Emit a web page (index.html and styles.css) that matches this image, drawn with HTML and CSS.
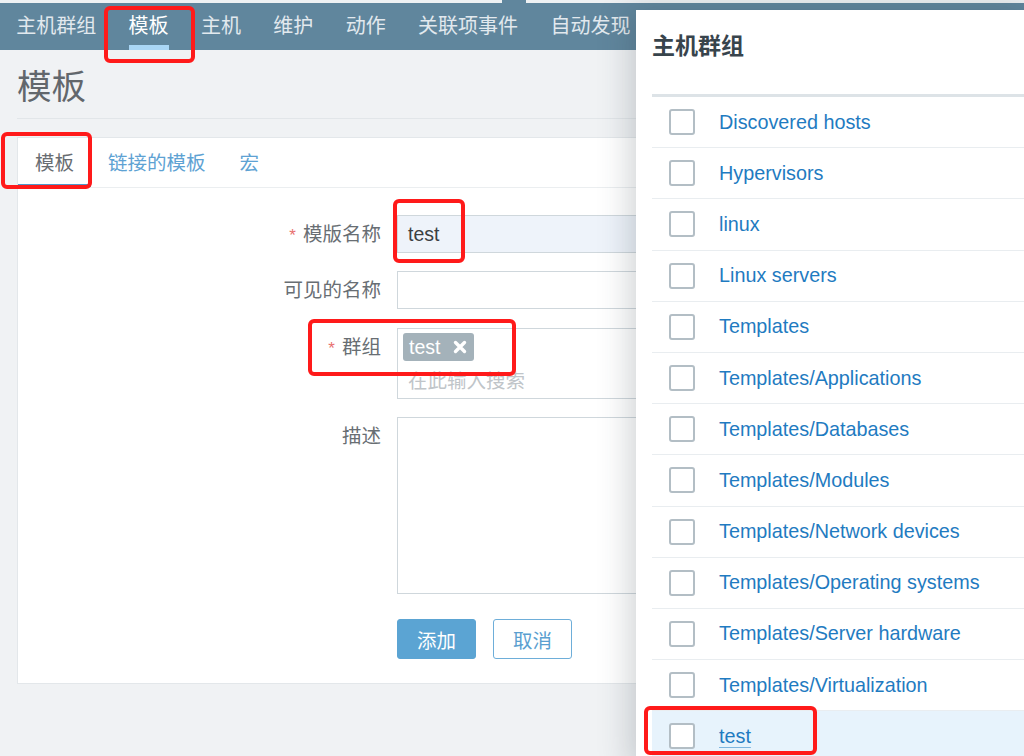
FILE: index.html
```html
<!DOCTYPE html>
<html lang="zh-CN">
<head>
<meta charset="utf-8">
<title>模板</title>
<link rel="stylesheet" href="styles.css">
</head>
<body>
<div class="topstrip"><span class="strip-a"></span><span class="strip-gap"></span><span class="strip-b"></span></div>
<nav class="nav">
  <a class="nav-item">主机群组</a>
  <a class="nav-item active">模板</a>
  <a class="nav-item">主机</a>
  <a class="nav-item">维护</a>
  <a class="nav-item">动作</a>
  <a class="nav-item">关联项事件</a>
  <a class="nav-item">自动发现</a>
</nav>
<main class="page">
  <div class="page-title"><h1>模板</h1></div>
  <section class="card">
    <div class="tabs">
      <a class="tab active">模板</a>
      <a class="tab">链接的模板</a>
      <a class="tab">宏</a>
    </div>
    <div class="form">
      <div class="lbl"><span class="req">*</span>模版名称</div>
      <div class="input filled">test</div>

      <div class="lbl">可见的名称</div>
      <div class="input"></div>

      <div class="lbl lbl-group"><span class="req">*</span>群组</div>
      <div class="multi">
        <div class="tags">
          <span class="tag">test<svg class="tag-x" viewBox="0 0 14 14" width="14" height="14"><path d="M2.5 2.5 L11.5 11.5 M11.5 2.5 L2.5 11.5" stroke="#fff" stroke-width="3.4" stroke-linecap="round"/></svg></span>
        </div>
        <div class="placeholder">在此输入搜索</div>
      </div>

      <div class="lbl">描述</div>
      <div class="textarea"></div>

      <div class="lbl"></div>
      <div class="buttons">
        <button class="btn primary">添加</button>
        <button class="btn secondary">取消</button>
      </div>
    </div>
  </section>
</main>

<aside class="modal">
  <div class="modal-head"><h2>主机群组</h2></div>
  <ul class="list">
    <li class="row"><span class="cb"></span><a class="link">Discovered hosts</a></li>
    <li class="row"><span class="cb"></span><a class="link">Hypervisors</a></li>
    <li class="row"><span class="cb"></span><a class="link">linux</a></li>
    <li class="row"><span class="cb"></span><a class="link">Linux servers</a></li>
    <li class="row"><span class="cb"></span><a class="link">Templates</a></li>
    <li class="row"><span class="cb"></span><a class="link">Templates/Applications</a></li>
    <li class="row"><span class="cb"></span><a class="link">Templates/Databases</a></li>
    <li class="row"><span class="cb"></span><a class="link">Templates/Modules</a></li>
    <li class="row"><span class="cb"></span><a class="link">Templates/Network devices</a></li>
    <li class="row"><span class="cb"></span><a class="link">Templates/Operating systems</a></li>
    <li class="row"><span class="cb"></span><a class="link">Templates/Server hardware</a></li>
    <li class="row"><span class="cb"></span><a class="link">Templates/Virtualization</a></li>
    <li class="row hover"><span class="cb"></span><a class="link under">test</a></li>
  </ul>
</aside>

<div class="mark mark-nav"></div>
<div class="mark mark-tab"></div>
<div class="mark mark-input"></div>
<div class="mark mark-group"></div>
<div class="mark mark-row"></div>
</body>
</html>
```

FILE: styles.css
```css
html, body {
  margin: 0;
  padding: 0;
}
body {
  width: 1024px;
  height: 756px;
  overflow: hidden;
  position: relative;
  background: #f0f2f4;
  font-family: "Liberation Sans", "Noto Sans CJK SC", sans-serif;
  font-size: 19.5px;
  color: #333;
}

.topstrip {
  display: flex;
  height: 3px;
  background: #60869d;
}
.strip-a { width: 502px; background: #eef1f3; }
.strip-gap { width: 24px; }
.strip-b { flex: 1; background: #eef1f3; }

.nav {
  display: flex;
  height: 47px;
  background: #60869d;
  padding-left: 0;
}
.nav-item {
  padding: 0 16.2px;
  line-height: 47px;
  font-size: 20px;
  color: #e2e9ee;
}
.nav-item.active {
  color: #ffffff;
  background-image: linear-gradient(#a9d6f5, #a9d6f5);
  background-repeat: no-repeat;
  background-origin: content-box;
  background-clip: content-box;
  background-size: 100% 5px;
  background-position: bottom;
}

.page {
  padding: 0 17px;
}
.page-title {
  padding-top: 17px;
  padding-bottom: 10px;
  border-bottom: 1px solid #e2e6e9;
}
.page-title h1 {
  margin: 0;
  font-size: 34.5px;
  line-height: 41px;
  font-weight: normal;
  color: #62676c;
}

.card {
  margin-top: 18px;
  background: #fff;
  border: 1px solid #e3e7ea;
}
.tabs {
  display: flex;
  height: 50px;
  box-sizing: border-box;
  border-bottom: 1px solid #ebeef0;
}
.tab {
  height: 49px;
  box-sizing: border-box;
  padding: 5px 17px 0;
  line-height: 41px;
  border-bottom: 3px solid transparent;
  color: #5ea2d3;
}
.tab.active {
  color: #686d72;
  border-bottom-color: #4f98cb;
}

.form {
  display: grid;
  grid-template-columns: 363px 453px;
  column-gap: 16px;
  row-gap: 18px;
  padding: 27px 0 24px;
}
.lbl {
  height: 38px;
  text-align: right;
  line-height: 38px;
  color: #686e73;
}
.lbl-group {
  margin-top: 1px;
}
.req {
  color: #e8706f;
  font-size: 17px;
  margin-right: 7px;
}
.input {
  height: 38px;
  box-sizing: border-box;
  border: 1px solid #cfd7dc;
  background: #fff;
  padding-left: 10px;
  line-height: 36px;
  color: #3b3f42;
}
.input.filled {
  background: #eef3fa;
}
.multi {
  height: 71px;
  margin-top: 1px;
  box-sizing: border-box;
  border: 1px solid #cfd7dc;
  display: flex;
  flex-direction: column;
}
.tags {
  display: flex;
  padding: 4px 5px 0;
}
.tag {
  display: flex;
  align-items: center;
  gap: 13px;
  height: 28px;
  padding: 0 7px 0 6px;
  border-radius: 3px;
  background: #a4b2ba;
  color: #fff;
}
.tag-x {
  display: block;
}
.placeholder {
  flex: 1;
  display: flex;
  align-items: center;
  padding-left: 10px;
  color: #c0c5c9;
}
.textarea {
  height: 177px;
  box-sizing: border-box;
  border: 1px solid #cfd7dc;
}
.buttons {
  display: flex;
  gap: 17px;
  padding-top: 7px;
}
.btn {
  width: 79px;
  height: 40px;
  box-sizing: border-box;
  border-radius: 3px;
  font-family: inherit;
  font-size: 19.5px;
  padding: 0;
}
.btn.primary {
  background: #5ba4d3;
  border: 1px solid #5ba4d3;
  color: #fff;
}
.btn.secondary {
  background: #fff;
  border: 1.5px solid #6eaed9;
  color: #5b9fd0;
}

.modal {
  position: absolute;
  left: 636px;
  top: 10px;
  width: 400px;
  height: 760px;
  background: #fff;
  box-shadow: -6px 0 30px rgba(40, 55, 65, 0.22);
}
.modal-head {
  height: 84px;
  box-sizing: border-box;
  padding: 21px 16px 0;
}
.modal-head h2 {
  margin: 0;
  font-size: 23px;
  line-height: 30px;
  font-weight: bold;
  color: #38444c;
}
.list {
  list-style: none;
  margin: 0 0 0 16px;
  padding: 0;
  border-top: 3px solid #dde3e7;
}
.row {
  display: flex;
  align-items: center;
  gap: 24px;
  height: 50.2px;
  padding-left: 17px;
  border-bottom: 1px solid #e9edf0;
  font-size: 19.8px;
}
.row.hover {
  background: #e7f3fc;
}
.cb {
  width: 26px;
  height: 26px;
  box-sizing: border-box;
  border: 2px solid #b3bec5;
  border-radius: 3px;
  background: #fff;
}
.link {
  color: #1f7bc1;
}
.link.under {
  text-decoration: underline;
  text-decoration-color: #7fb6df;
  text-underline-offset: 4px;
}

.mark {
  position: absolute;
  box-sizing: border-box;
  border: 4px solid #ff1a1a;
  border-radius: 6px;
}
.mark-nav { left: 104px; top: 6px; width: 91px; height: 57px; }
.mark-tab { left: 1px; top: 132px; width: 91px; height: 57px; }
.mark-input { left: 393px; top: 199px; width: 72px; height: 64px; }
.mark-group { left: 308px; top: 319px; width: 208px; height: 57px; }
.mark-row { left: 644px; top: 706px; width: 173px; height: 49px; }
```
